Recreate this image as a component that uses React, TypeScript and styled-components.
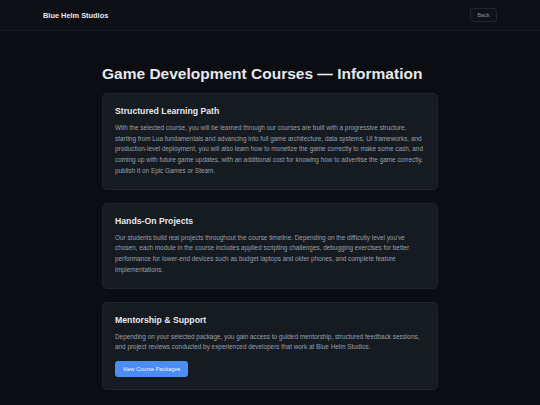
import styled, { createGlobalStyle } from 'styled-components';

const GlobalStyle = createGlobalStyle`
  html, body {
    margin: 0;
    padding: 0;
    background: #0b0d12;
    font-family: 'Liberation Sans', Arial, sans-serif;
  }
  * {
    box-sizing: border-box;
  }
`;

const Header = styled.header`
  height: 31px;
  padding: 0 43px;
  display: flex;
  align-items: center;
  justify-content: space-between;
  background: #0e1016;
  border-bottom: 1px solid #171a21;
`;

const Brand = styled.span`
  color: #e6e9ee;
  font-size: 7.4px;
  font-weight: 700;
`;

const BackButton = styled.button`
  height: 14px;
  width: 27px;
  padding: 0;
  border: 1px solid #22252e;
  border-radius: 3px;
  background: #101219;
  color: #8a909b;
  font-family: inherit;
  font-size: 5.4px;
  cursor: pointer;
`;

const Main = styled.main`
  max-width: 336px;
  margin: 0 auto;
  padding: 33px 0 20px;
`;

const Title = styled.h1`
  margin: 0 0 10px;
  color: #e6e9ee;
  font-size: 15.5px;
  line-height: 19px;
  font-weight: 700;
`;

const Card = styled.section`
  padding: 12px;
  margin-bottom: 13px;
  background: #161a21;
  border: 1px solid #20252d;
  border-radius: 5px;
`;

const CardTitle = styled.h2`
  margin: 0 0 6px;
  color: #e6e9ee;
  font-size: 8.7px;
  line-height: 10.8px;
  font-weight: 700;
`;

const CardText = styled.p`
  margin: 0;
  color: #98a0ab;
  font-size: 6.4px;
  line-height: 10.8px;
`;

const PrimaryButton = styled.button`
  margin-top: 8px;
  height: 16px;
  width: 73px;
  padding: 0;
  border: none;
  border-radius: 3px;
  background: #4b8cf5;
  color: #eef4ff;
  font-family: inherit;
  font-size: 5.6px;
  cursor: pointer;
`;

const sections = [
  {
    title: 'Structured Learning Path',
    text: 'With the selected course, you will be learned through our courses are built with a progressive structure, starting from Lua fundamentals and advancing into full game architecture, data systems, UI frameworks, and production-level deployment, you will also learn how to monetize the game correctly to make some cash, and coming up with future game updates, with an additional cost for knowing how to advertise the game correctly, publish it on Epic Games or Steam.',
  },
  {
    title: 'Hands-On Projects',
    text: "Our students build real projects throughout the course timeline. Depending on the difficulty level you've chosen, each module in the course includes applied scripting challenges, debugging exercises for better performance for lower-end devices such as budget laptops and older phones, and complete feature implementations.",
  },
];

export default function App() {
  return (
    <>
      <GlobalStyle />
      <Header>
        <Brand>Blue Helm Studios</Brand>
        <BackButton>Back</BackButton>
      </Header>
      <Main>
        <Title>Game Development Courses — Information</Title>
        {sections.map((s) => (
          <Card key={s.title}>
            <CardTitle>{s.title}</CardTitle>
            <CardText>{s.text}</CardText>
          </Card>
        ))}
        <Card>
          <CardTitle>Mentorship &amp; Support</CardTitle>
          <CardText>
            Depending on your selected package, you gain access to guided mentorship, structured feedback sessions,
            and project reviews conducted by experienced developers that work at Blue Helm Studios.
          </CardText>
          <PrimaryButton>View Course Packages</PrimaryButton>
        </Card>
      </Main>
    </>
  );
}
